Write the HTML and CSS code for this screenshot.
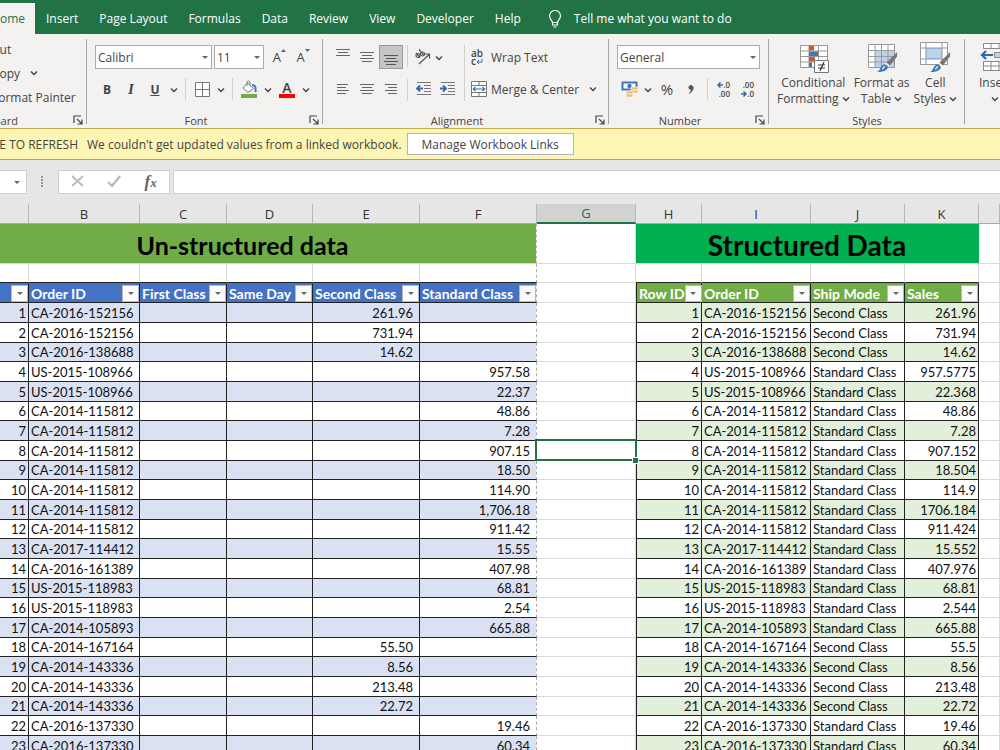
FILE: index.html
```html
<!DOCTYPE html>
<html lang="en">
<head>
  <meta charset="UTF-8">
  <title>Workbook</title>
  <meta name="viewport" content="width=device-width, initial-scale=1">
  <link rel="stylesheet" href="styles.css">
</head>
<body>
  <!-- shared icons -->
  <svg class="defs" aria-hidden="true">
    <symbol id="chev" viewBox="0 0 8 8"><path d="M1 2.5l3 3 3-3" fill="none" stroke="#444" stroke-width="1.4"/></symbol>
    <symbol id="launch" viewBox="0 0 10 10"><path d="M1 8V1h7M4 4l4.500 4.500M9 4.500V9H4.500" fill="none" stroke="#444" stroke-width="1.200"/></symbol>
    <symbol id="brush" viewBox="0 0 24 24"><path d="M23 1v5l-8 10-4-3z" fill="#777"/><path d="M14.500 16.500l-4-3.500" stroke="#fff" stroke-width="1.500"/><path d="M1 23c4-1 3-6 7-8 2-1 5 1 5 3-1 4-7 5-12 5z" fill="#3b78b5"/><path d="M7 20c1-1 1-3 3-3" stroke="#fff" stroke-width="1.300" fill="none"/></symbol>
  </svg>

  <nav class="tabs">
    <a class="tab active" href="#">Home</a>
    <a class="tab" href="#">Insert</a>
    <a class="tab" href="#">Page Layout</a>
    <a class="tab" href="#">Formulas</a>
    <a class="tab" href="#">Data</a>
    <a class="tab" href="#">Review</a>
    <a class="tab" href="#">View</a>
    <a class="tab" href="#">Developer</a>
    <a class="tab" href="#">Help</a>
    <a class="tab tell" href="#">
      <svg width="14" height="18" viewBox="0 0 14 18" fill="none" stroke="#fff" stroke-width="1.2"><path d="M4.500 12.500c0-2-3-3.200-3-6.500a5.500 5.500 0 0 1 11 0c0 3.300-3 4.500-3 6.500zM4.500 12.500v2.500h5v-2.500M5.500 17h3"/></svg>
      Tell me what you want to do
    </a>
  </nav>

  <div class="ribbon">
    <section class="group clipboard">
      <div class="clip-list">
        <button class="text-btn">Cut</button>
        <button class="text-btn">Copy <svg class="chev"><use href="#chev"/></svg></button>
        <button class="text-btn">Format Painter</button>
      </div>
      <div class="group-label"><span>Clipboard</span><button class="launch" aria-label="Clipboard settings"><svg><use href="#launch"/></svg></button></div>
    </section>

    <section class="group font">
      <div class="row">
        <div class="combo name"><select aria-label="Font"><option>Calibri</option></select></div>
        <div class="combo size"><select aria-label="Font size"><option>11</option></select></div>
        <button class="tool grow" aria-label="Increase font size">A<svg width="5" height="4" viewBox="0 0 5 4"><path d="M0 3l2.500-3L5 3z" fill="#2b6cb0"/></svg></button>
        <button class="tool grow" aria-label="Decrease font size">A<svg width="5" height="4" viewBox="0 0 5 4"><path d="M0 0h5L2.500 3z" fill="#2b6cb0"/></svg></button>
      </div>
      <div class="row">
        <button class="tool bold">B</button>
        <button class="tool italic">I</button>
        <button class="tool underline">U</button>
        <button class="drop" aria-label="Underline options"><svg class="chev"><use href="#chev"/></svg></button>
        <span class="sep"></span>
        <button class="tool" aria-label="Borders"><svg width="15" height="15" viewBox="0 0 15 15"><path d="M.5.5h14v14H.5zM7.500.5v14M.5 7.500h14" fill="#fff" stroke="#777"/></svg></button>
        <button class="drop" aria-label="Border options"><svg class="chev"><use href="#chev"/></svg></button>
        <span class="sep"></span>
        <button class="tool" aria-label="Fill colour"><svg width="18" height="18" viewBox="0 0 18 18"><path d="M7.500 3l6 5.500-5.500 4-5-4.500z" fill="#fff" stroke="#777"/><path d="M7 6V2.500C7 .5 10 .5 10 2.500v3" fill="none" stroke="#777"/><path d="M12 5c3 0 4 2 3.500 7" fill="none" stroke="#3b78b5" stroke-width="2"/><path d="M1 14h16v4H1z" fill="#70ad47"/></svg></button>
        <button class="drop" aria-label="Fill options"><svg class="chev"><use href="#chev"/></svg></button>
        <button class="tool font-color">A</button>
        <button class="drop" aria-label="Font colour options"><svg class="chev"><use href="#chev"/></svg></button>
      </div>
      <div class="group-label"><span>Font</span><button class="launch" aria-label="Font settings"><svg><use href="#launch"/></svg></button></div>
    </section>

    <section class="group alignment">
      <div class="blocks">
        <div class="block">
          <div class="row">
            <button class="tool" aria-label="Top align"><svg width="16" height="16" viewBox="0 0 16 16" stroke="#666"><path d="M1 .5h14M3 3.500h10M1 6.500h14"/></svg></button>
            <button class="tool" aria-label="Middle align"><svg width="16" height="16" viewBox="0 0 16 16" stroke="#666"><path d="M1 3.500h14M3 6.500h10M1 9.500h14M3 12.500h10"/></svg></button>
            <button class="tool pressed" aria-label="Bottom align"><svg width="16" height="16" viewBox="0 0 16 16" stroke="#555"><path d="M1 6.500h14M3 9.500h10M1 12.500h14M3 15.500h10"/></svg></button>
          </div>
          <div class="row">
            <button class="tool" aria-label="Align left"><svg width="12" height="10" viewBox="0 0 12 10" stroke="#666"><path d="M0 .5h11M0 3.500h9M0 6.500h12M0 9.500h9"/></svg></button>
            <button class="tool" aria-label="Centre"><svg width="14" height="10" viewBox="0 0 14 10" stroke="#666"><path d="M0 .5h14M2 3.500h10M0 6.500h14M2 9.500h10"/></svg></button>
            <button class="tool" aria-label="Align right"><svg width="12" height="10" viewBox="0 0 12 10" stroke="#666"><path d="M0 .5h12M3 3.500h9M0 6.500h12M3 9.500h9"/></svg></button>
          </div>
        </div>
        <div class="seps"><span class="sep"></span><span class="sep"></span></div>
        <div class="block mid">
          <div class="row">
            <button class="tool slim" aria-label="Orientation"><svg width="17" height="16" viewBox="0 0 17 16"><g fill="none" stroke="#555" stroke-width="1.200"><circle cx="4" cy="6.500" r="2"/><path d="M2 4l4 4.500"/><circle cx="8.500" cy="5" r="2"/><path d="M5 .5l5 6M5 15L15 5.500M11 5h4.500v4.500"/></g></svg></button>
            <button class="drop" aria-label="Orientation options"><svg class="chev"><use href="#chev"/></svg></button>
          </div>
          <div class="row">
            <button class="tool" aria-label="Decrease indent"><svg width="16" height="14" viewBox="0 0 16 14"><path d="M1 .5h14M8 3.500h7M8 6.500h7M8 9.500h7M1 12.500h14" stroke="#777"/><path d="M7 6.500H1.500M4 3.500l-3 3 3 3" fill="none" stroke="#2b6cb0" stroke-width="1.800"/></svg></button>
            <button class="tool" aria-label="Increase indent"><svg width="16" height="14" viewBox="0 0 16 14"><path d="M1 .5h14M8 3.500h7M8 6.500h7M8 9.500h7M1 12.500h14" stroke="#777"/><path d="M0 6.500h5.500M3 3.500l3 3-3 3" fill="none" stroke="#2b6cb0" stroke-width="1.800"/></svg></button>
          </div>
        </div>
        <span class="sep tall"></span>
        <div class="block">
          <button class="row text-btn"><span class="wrap-icon"><b>ab</b><b>c<svg width="7" height="6" viewBox="0 0 7 6"><path d="M6 0v3H1M3 1L1 3l2 2" fill="none" stroke="#2b6cb0"/></svg></b></span>Wrap Text</button>
          <button class="row text-btn"><svg width="16" height="16" viewBox="0 0 16 16"><path d="M.5.5h15v15H.5zM.5 4.500h15M.5 11.500h15M8 .5v4M8 11.500v4" fill="#fff" stroke="#777"/><path d="M2 8h12M4.500 5.800L2.300 8l2.200 2.200M11.500 5.800L13.700 8l-2.200 2.200" fill="none" stroke="#2b6cb0" stroke-width="1.200"/></svg>Merge &amp; Center<svg class="chev far"><use href="#chev"/></svg></button>
        </div>
      </div>
      <div class="group-label"><span>Alignment</span><button class="launch" aria-label="Alignment settings"><svg><use href="#launch"/></svg></button></div>
    </section>

    <section class="group number">
      <div class="row">
        <div class="combo format"><select aria-label="Number format"><option>General</option></select></div>
      </div>
      <div class="row">
        <button class="tool" aria-label="Accounting format"><svg width="17" height="16" viewBox="0 0 17 16"><path d="M1.500 1.500h14v7h-14z" fill="#fff" stroke="#3b78b5" stroke-width="2"/><circle cx="8.500" cy="5" r="2.200" fill="#3b78b5"/><g fill="#edb97a" stroke="#fff" stroke-width=".6"><rect x="10" y="6" width="7" height="3" rx="1"/><rect x="10" y="9" width="7" height="3" rx="1"/><rect x="5" y="10" width="7" height="3" rx="1"/><rect x="5" y="13" width="7" height="3" rx="1"/></g></svg></button>
        <button class="drop" aria-label="Accounting options"><svg class="chev"><use href="#chev"/></svg></button>
        <button class="tool percent">%</button>
        <button class="tool" aria-label="Comma style"><svg width="6" height="9" viewBox="0 0 6 9"><path d="M5 2.500C5 5 4 7 1 8.500M3 .5a2 2 0 1 1-.1 0z" fill="#555" stroke="#555"/></svg></button>
        <span class="sep"></span>
        <button class="tool decimals" aria-label="Increase decimal"><span><svg width="6" height="6" viewBox="0 0 6 6"><path d="M6 3H1M3.500.5L1 3l2.500 2.500" fill="none" stroke="#2b6cb0" stroke-width="1.500"/></svg>.0</span><span>.00</span></button>
        <button class="tool decimals" aria-label="Decrease decimal"><span>.00</span><span><svg width="6" height="6" viewBox="0 0 6 6"><path d="M0 3h5M2.500.5L5 3 2.500 5.500" fill="none" stroke="#2b6cb0" stroke-width="1.500"/></svg>.0</span></button>
      </div>
      <div class="group-label"><span>Number</span><button class="launch" aria-label="Number settings"><svg><use href="#launch"/></svg></button></div>
    </section>

    <section class="group styles">
      <div class="big-row">
        <button class="big">
          <svg width="32" height="32" viewBox="0 0 32 32"><path d="M3.500 3.500h27v22h-27zM12 3v22M21.500 3v22M3 9h27M3 14.500h27M3 20h27" fill="#fff" stroke="#999"/><path d="M12 4h5v4.500h-5zM12 15h6v4.500h-6z" fill="#d9532c"/><path d="M12 9.500h9v4.500h-9zM12 20.500h3v4.500h-3z" fill="#3b78b5"/><path d="M17.500 18.500h14v12h-14z" fill="#fff" stroke="#777"/><path d="M21 23h7M21 26h7M27 20l-4 9" stroke="#333" stroke-width="1.200"/></svg>
          <span>Conditional</span><span>Formatting <svg class="chev"><use href="#chev"/></svg></span>
        </button>
        <button class="big">
          <svg width="32" height="32" viewBox="0 0 32 32"><path d="M2.500 2.500h26v23h-26z" fill="#fff"/><path d="M9 8.500h19v17H9z" fill="#bdd3ea"/><path d="M2.500 2.500h26v23h-26zM9 2v23M15.500 2v23M22 2v23M2 8.500h26M2 14.500h26M2 20h26" fill="none" stroke="#999"/><use href="#brush" x="10" y="8" width="22" height="24"/></svg>
          <span>Format as</span><span>Table <svg class="chev"><use href="#chev"/></svg></span>
        </button>
        <button class="big">
          <svg width="32" height="32" viewBox="0 0 32 32"><path d="M1.500.5h27v22h-27zM7 .5v22M23 .5v22M1.500 6h27M1.500 17h27" fill="#fff" stroke="#999"/><path d="M7.500 6.500h15v10h-15z" fill="#bdd3ea" stroke="#8fb0d2"/><use href="#brush" x="10" y="8" width="22" height="24"/></svg>
          <span>Cell</span><span>Styles <svg class="chev"><use href="#chev"/></svg></span>
        </button>
      </div>
      <div class="group-label"><span>Styles</span></div>
    </section>

    <section class="group cells">
      <div class="big-row">
        <button class="big">
          <svg width="32" height="32" viewBox="0 0 32 32"><path d="M4.500 1.500h24v5h-24zM4.500 19.500h24v9h-24zM12 1.500v5M20 1.500v5M12 19.500v9M20 19.500v9M4.500 24h24" fill="#fff" stroke="#888"/><path d="M15.500 10.500h14v5h-14z" fill="#bdd3ea" stroke="#888"/><path d="M14 13H3M7 9l-4 4 4 4" fill="none" stroke="#2b6cb0" stroke-width="2.200"/></svg>
          <span>Insert</span><span><svg class="chev"><use href="#chev"/></svg></span>
        </button>
      </div>
    </section>
  </div>

  <div class="message">
    <div class="message-title"><strong>UNABLE TO REFRESH</strong></div>
    <span>We couldn't get updated values from a linked workbook.</span>
    <button class="links-btn">Manage Workbook Links</button>
  </div>

  <div class="formula-bar">
    <button class="name-box" aria-label="Name box"></button>
    <svg class="dots" width="3" height="12" viewBox="0 0 3 12" fill="#999"><path d="M0 0h2v2H0zM0 3h2v2H0zM0 6h2v2H0zM0 9h2v2H0z"/></svg>
    <div class="fx-box">
      <button aria-label="Cancel"><svg width="13" height="12" viewBox="0 0 13 12"><path d="M1 1l11 10M12 1L1 11" stroke="#bbb" stroke-width="1.800"/></svg></button>
      <button aria-label="Enter"><svg width="14" height="12" viewBox="0 0 14 12"><path d="M1 7l4 4 8-10" fill="none" stroke="#bbb" stroke-width="2.400"/></svg></button>
      <button class="fx" aria-label="Insert function">f<small>x</small></button>
    </div>
    <input class="formula" type="text" aria-label="Formula">
  </div>

  <table class="sheet">
    <colgroup>
      <col class="a"><col class="b"><col class="c"><col class="d"><col class="e"><col class="f">
      <col class="g"><col class="h"><col class="i"><col class="j"><col class="k"><col>
    </colgroup>
    <thead>
      <tr class="letters">
        <th></th><th>B</th><th>C</th><th>D</th><th>E</th><th>F</th>
        <th class="current">G</th><th>H</th><th>I</th><th>J</th><th>K</th><th></th>
      </tr>
      <tr class="titles">
        <th class="un" colspan="6">Un-structured data</th><td></td><th class="st" colspan="4">Structured Data</th><td></td>
      </tr>
      <tr class="blank">
        <td></td><td></td><td></td><td></td><td></td><td class="edge"></td>
        <td></td><td></td><td></td><td></td><td></td><td></td>
      </tr>
      <tr class="heads">
        <th class="blue"><div><button aria-label="Filter"></button></div></th>
        <th class="blue"><div>Order ID<button aria-label="Filter Order ID"></button></div></th>
        <th class="blue"><div>First Class<button aria-label="Filter First Class"></button></div></th>
        <th class="blue"><div>Same Day<button aria-label="Filter Same Day"></button></div></th>
        <th class="blue"><div>Second Class<button aria-label="Filter Second Class"></button></div></th>
        <th class="blue edge"><div>Standard Class<button aria-label="Filter Standard Class"></button></div></th>
        <td></td>
        <th class="green first"><div>Row ID<button aria-label="Filter Row ID"></button></div></th>
        <th class="green"><div>Order ID<button aria-label="Filter Order ID"></button></div></th>
        <th class="green"><div>Ship Mode<button aria-label="Filter Ship Mode"></button></div></th>
        <th class="green"><div>Sales<button aria-label="Filter Sales"></button></div></th>
        <td></td>
      </tr>
    </thead>
    <tbody id="rows"></tbody>
  </table>

  <script src="script.js"></script>
</body>
</html>
```

FILE: styles.css
```css
:root {
  --green: #217346;
  --ribbon: #f3f2f1;
  --text: #444;
  --grid: #d9d9d9;
  --line: #222;
}

* {
  box-sizing: border-box;
}

body {
  margin: 0;
  height: 100vh;
  overflow: hidden;
  background: #fff;
  color: var(--text);
  font-family: "Open Sans", "Noto Sans", sans-serif;
  font-size: 12px;
}

button {
  margin: 0;
  padding: 0;
  border: none;
  background: none;
  color: inherit;
  font: inherit;
}

svg {
  flex: none;
}

.defs {
  position: absolute;
  width: 0;
  height: 0;
}

.chev {
  width: 8px;
  height: 8px;
}

/* tabs */
.tabs {
  display: flex;
  gap: 1px;
  height: 34px;
  padding-top: 3px;
  background: var(--green);
}

.tab {
  display: flex;
  align-items: center;
  padding: 0 10px;
  color: #fff;
  text-decoration: none;
  white-space: nowrap;
}

.tab.active {
  width: 35px;
  justify-content: flex-end;
  overflow: hidden;
  background: var(--ribbon);
  color: var(--green);
}

.tell {
  gap: 12px;
  padding-left: 16px;
}

/* ribbon */
.ribbon {
  display: flex;
  height: 95px;
  overflow: hidden;
  background: var(--ribbon);
  border-bottom: 1px solid #c0ab4e;
}

.group {
  position: relative;
  display: flex;
  flex: none;
  flex-direction: column;
  gap: 8px;
  padding: 11px 8px 0;
}

.group::after {
  content: "";
  position: absolute;
  top: 5px;
  right: 0;
  bottom: 4px;
  width: 1px;
  background: #a6a6a6;
}

.clipboard { width: 87px; padding-top: 3px; gap: 0; overflow: hidden; }
.font { width: 236px; }
.alignment { width: 286px; }
.number { width: 160px; }
.styles { width: 196px; gap: 0; }
.cells { width: 56px; }

.group-label {
  display: flex;
  align-items: center;
  height: 16px;
  margin: auto -8px 0;
  font-size: 11px;
}

.group-label span {
  flex: 1;
  text-align: center;
}

.launch {
  display: flex;
  justify-content: center;
  width: 18px;
}

.launch svg {
  width: 10px;
  height: 10px;
}

.clip-list {
  display: flex;
  flex-direction: column;
  margin-left: -16px;
}

.clip-list .text-btn {
  height: 24px;
}

.clipboard .group-label span {
  text-align: left;
  margin-left: -32px;
}

.text-btn {
  display: flex;
  align-items: center;
  gap: 4px;
  white-space: nowrap;
}

.clip-list .text-btn {
  gap: 10px;
}

.row {
  display: flex;
  align-items: center;
  height: 24px;
}

.combo {
  position: relative;
  height: 24px;
}

.combo select {
  width: 100%;
  height: 100%;
  padding: 0 2px;
  border: 1px solid #ababab;
  border-radius: 0;
  background: #fff;
  color: var(--text);
  font: inherit;
  appearance: none;
}

.combo::after,
.name-box::after,
.heads button::after {
  content: "";
  border: 3px solid transparent;
  border-top-color: #666;
  border-bottom: none;
}

.combo::after {
  position: absolute;
  top: 11px;
  right: 4px;
}

.name { width: 118px; margin-right: 2px; }
.size { width: 51px; margin-right: 3px; }
.format { width: 143px; }

.tool {
  display: flex;
  align-items: center;
  justify-content: center;
  width: 24px;
  height: 24px;
}

.tool.slim {
  width: 20px;
}

.pressed {
  background: #c5c5c5;
  border: 1px solid #999;
}

.drop {
  width: 14px;
  height: 24px;
}

.sep {
  width: 1px;
  height: 22px;
  margin: 0 4px;
  background: #d0d0d0;
}

.seps {
  display: flex;
  flex-direction: column;
  justify-content: space-between;
}

.sep.tall {
  height: 56px;
}

.grow {
  font-size: 13px;
}

.grow svg {
  align-self: flex-start;
  margin-top: 4px;
}

.bold { font-weight: 700; }
.italic { font: italic 700 15px "Liberation Serif", serif; }
.underline { font-weight: 700; text-decoration: underline; }

.font-color {
  flex-direction: column;
  font-size: 14px;
  font-weight: 600;
  line-height: 13px;
}

.font-color::after {
  content: "";
  width: 16px;
  height: 4px;
  background: #f00;
}

.percent {
  font-size: 15px;
}

.decimals {
  flex-direction: column;
  align-items: flex-end;
  padding-right: 6px;
  font-size: 8px;
  font-weight: 600;
  line-height: 9px;
}

.blocks {
  display: flex;
}

.block {
  display: flex;
  flex-direction: column;
  gap: 8px;
}

.mid {
  width: 48px;
}

.block > .text-btn {
  padding-left: 2px;
}

.wrap-icon {
  width: 16px;
  text-align: left;
  font-size: 10px;
  line-height: 8px;
}

.wrap-icon b {
  display: block;
  font-weight: 600;
}

.far {
  margin-left: 6px;
}

.big-row {
  display: flex;
  margin-top: -3px;
  gap: 4px;
}

.big {
  display: flex;
  flex-direction: column;
  align-items: center;
  line-height: 16px;
  white-space: nowrap;
}

.big > svg {
  margin-bottom: 1px;
}

.cells .big {
  margin-left: 6px;
}

/* message bar */
.message {
  display: flex;
  align-items: center;
  height: 31px;
  background: #fdf5b3;
  border-bottom: 1px solid #b9a44c;
}

.message-title {
  display: flex;
  justify-content: flex-end;
  width: 78px;
  margin-right: 9px;
  overflow: hidden;
  white-space: nowrap;
}

.message-title strong {
  font-weight: 400;
}

.links-btn {
  height: 22px;
  margin-left: 5px;
  padding: 0 14px;
  background: #fff;
  border: 1px solid #b5b5b5;
}

/* formula bar */
.formula-bar {
  display: flex;
  align-items: center;
  height: 44px;
  background: #e6e6e6;
}

.name-box,
.fx-box,
.formula {
  height: 24px;
  background: #fff;
  border: 1px solid #cfcfcf;
}

.name-box {
  display: flex;
  align-items: center;
  justify-content: flex-end;
  width: 27px;
  padding-right: 6px;
  border-left: none;
}

.dots {
  margin: 0 14px;
}

.fx-box {
  display: flex;
  width: 112px;
  margin-right: 3px;
}

.fx-box button {
  flex: 1;
}

.fx-box .fx {
  font: italic 700 17px "Liberation Serif", serif;
  color: #666;
}

.fx small {
  font-size: 13px;
}

.formula {
  flex: 1;
  border-right: none;
}

/* sheet */
.sheet {
  width: 100%;
  table-layout: fixed;
  border-collapse: separate;
  border-spacing: 0;
  color: #111;
  font-family: Lato, "Open Sans", sans-serif;
  font-size: 13px;
}

.a { width: 29px; }
.b { width: 111px; }
.c { width: 87px; }
.d { width: 86px; }
.e { width: 107px; }
.f { width: 117px; }
.g { width: 99px; }
.h { width: 66px; }
.i { width: 109px; }
.j { width: 94px; }
.k { width: 74px; }

.sheet td,
.sheet th {
  padding: 1px 2px 0;
  border-right: 1px solid var(--grid);
  border-bottom: 1px solid var(--grid);
  line-height: 17px;
  white-space: nowrap;
}

.sheet .letters th {
  height: 20px;
  background: #e6e6e6;
  border-right-color: #b8b8b8;
  border-bottom-color: #aaa;
  color: #333;
  font-family: "Open Sans", sans-serif;
  font-weight: 400;
}

.sheet .letters .current {
  padding-top: 0;
  background: #d2d2d2;
  border-bottom: 2px solid var(--green);
  color: var(--green);
}

.sheet .titles th {
  height: 40px;
  padding-top: 4px;
  color: #000;
  font-weight: 700;
}

/* column A runs on past the left edge */
.sheet .un {
  padding-right: 53px;
  background: #70ad47 padding-box;
  border-right: 1px dashed #bbb;
  font-size: 25px;
}

.sheet .st {
  background: #00b050;
  border-right-color: #00b050;
  font-size: 28px;
}

.blank td {
  height: 19px;
}

.sheet .blank td {
  border-bottom-color: var(--line);
}

.sheet .blank td:nth-child(7),
.sheet .blank td:last-child {
  border-bottom-color: var(--grid);
}

.heads th {
  height: 20px;
  color: #fff;
  font-size: 14px;
  text-align: left;
}

.heads div {
  display: flex;
  align-items: center;
  justify-content: space-between;
  height: 18px;
}

.sheet .heads th {
  padding-right: 0;
}

.heads th:first-child div {
  justify-content: flex-end;
}

.heads button {
  display: flex;
  flex: none;
  align-items: center;
  justify-content: center;
  width: 17px;
  height: 17px;
  background: #fbfbfb;
  border: 1px solid #b4b9c2;
}

.blue { background: #4472c4; }
.green { background: #70ad47; }

.sheet .blue,
.sheet .green,
.sheet .cell {
  border-color: var(--line);
}

.sheet .first {
  border-left: 1px solid var(--line);
}

.sheet .edge {
  border-right: 1px dashed #aaa;
  background-clip: padding-box;
}

.sheet tbody td {
  height: 20px;
}

.sheet tbody tr:nth-child(3n) td {
  height: 19px;
}

.num {
  text-align: right;
}

.sheet .left-num {
  padding-right: 6px;
}

tbody tr:nth-child(odd) .un-cell { background-color: #d9e1f2; }
tbody tr:nth-child(odd) .st-cell { background-color: #e2efda; }

.selected {
  position: relative;
}

.selected::before {
  content: "";
  position: absolute;
  inset: -2px -2px -1px;
  border: 2px solid var(--green);
}

.selected::after {
  content: "";
  position: absolute;
  right: -3px;
  bottom: -3px;
  width: 5px;
  height: 5px;
  background: var(--green);
  box-shadow: 0 0 0 1px #fff;
}
```

FILE: script.js
```js
// order id, ship mode, pivoted value, raw sales
const orders = [
  ["CA-2016-152156", "Second Class", "261.96", "261.96"],
  ["CA-2016-152156", "Second Class", "731.94", "731.94"],
  ["CA-2016-138688", "Second Class", "14.62", "14.62"],
  ["US-2015-108966", "Standard Class", "957.58", "957.5775"],
  ["US-2015-108966", "Standard Class", "22.37", "22.368"],
  ["CA-2014-115812", "Standard Class", "48.86", "48.86"],
  ["CA-2014-115812", "Standard Class", "7.28", "7.28"],
  ["CA-2014-115812", "Standard Class", "907.15", "907.152"],
  ["CA-2014-115812", "Standard Class", "18.50", "18.504"],
  ["CA-2014-115812", "Standard Class", "114.90", "114.9"],
  ["CA-2014-115812", "Standard Class", "1,706.18", "1706.184"],
  ["CA-2014-115812", "Standard Class", "911.42", "911.424"],
  ["CA-2017-114412", "Standard Class", "15.55", "15.552"],
  ["CA-2016-161389", "Standard Class", "407.98", "407.976"],
  ["US-2015-118983", "Standard Class", "68.81", "68.81"],
  ["US-2015-118983", "Standard Class", "2.54", "2.544"],
  ["CA-2014-105893", "Standard Class", "665.88", "665.88"],
  ["CA-2014-167164", "Second Class", "55.50", "55.5"],
  ["CA-2014-143336", "Second Class", "8.56", "8.56"],
  ["CA-2014-143336", "Second Class", "213.48", "213.48"],
  ["CA-2014-143336", "Second Class", "22.72", "22.72"],
  ["CA-2016-137330", "Standard Class", "19.46", "19.46"],
  ["CA-2016-137330", "Standard Class", "60.34", "60.34"]
];

const rows = document.getElementById("rows");

function addCell(tr, text, classes) {
  const td = document.createElement("td");
  td.textContent = text;
  td.className = classes;
  tr.appendChild(td);
}

orders.forEach(([id, mode, value, sales], i) => {
  const tr = document.createElement("tr");
  const n = i + 1;

  addCell(tr, n, "cell un-cell num");
  addCell(tr, id, "cell un-cell");
  addCell(tr, "", "cell un-cell");
  addCell(tr, "", "cell un-cell");
  addCell(tr, mode === "Second Class" ? value : "", "cell un-cell num left-num");
  addCell(tr, mode === "Standard Class" ? value : "", "cell un-cell num left-num edge");
  addCell(tr, "", n === 8 ? "selected" : "");
  addCell(tr, n, "cell st-cell num first");
  addCell(tr, id, "cell st-cell");
  addCell(tr, mode, "cell st-cell");
  addCell(tr, sales, "cell st-cell num");
  addCell(tr, "", "");

  rows.appendChild(tr);
});
```
